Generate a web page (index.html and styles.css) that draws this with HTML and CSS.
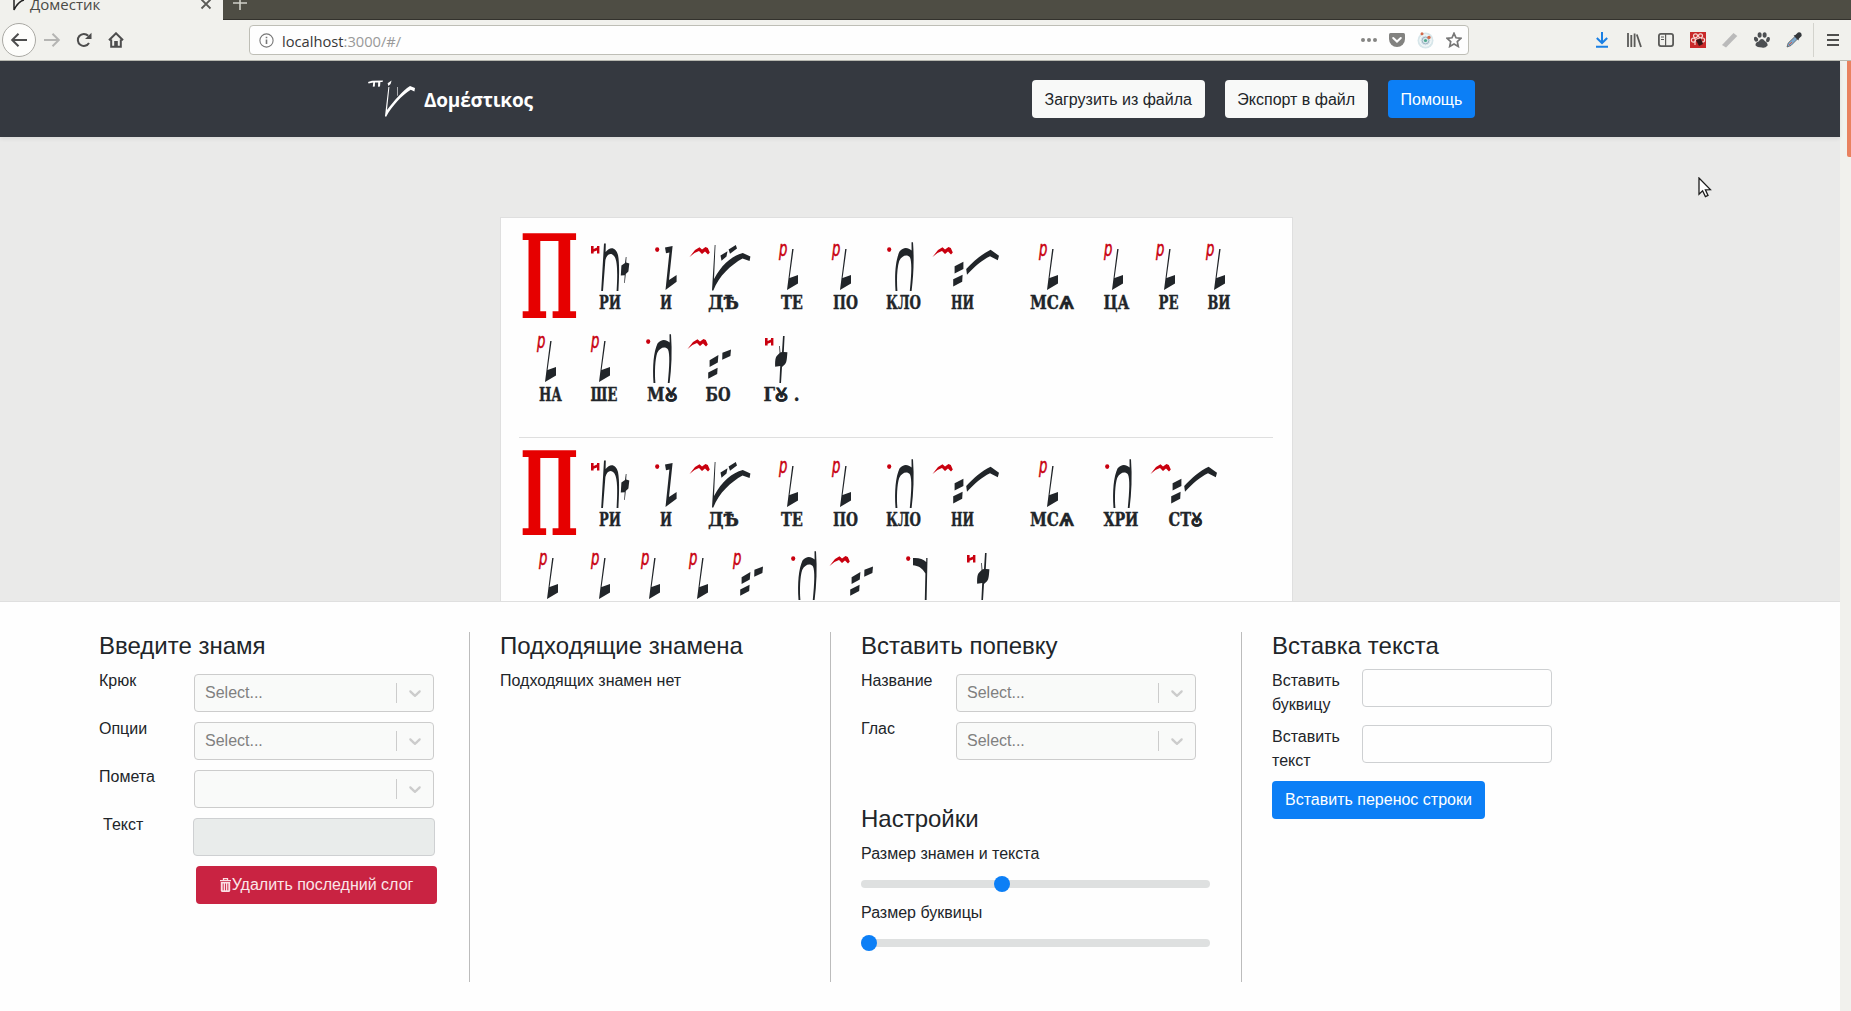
FILE: index.html
```html
<!DOCTYPE html>
<html lang="ru">
<head>
<meta charset="utf-8">
<title>Доместик</title>
<link rel="stylesheet" href="styles.css">
</head>
<body>
<svg class="defs" aria-hidden="true">
  <defs>
    <g id="mark-r" class="mark"><text x="0" y="16" font-size="20.5" textLength="8.4" lengthAdjust="spacingAndGlyphs">р</text></g>
    <g id="mark-n" class="mark"><path d="M0 6 L2.6 6 L2.6 9 L6 7.6 L6 6 L8.4 6 L8.4 13.6 L6 13.6 L6 10.6 L2.6 11.8 L2.6 13.6 L0 13.6Z"/></g>
    <g id="mark-dot" class="mark"><ellipse cx="2.2" cy="9.6" rx="2.1" ry="2.4"/></g>
    <g id="mark-m" class="mark"><path d="M-.5 17 L5 10 L9.5 7.2 L12 9.6 L15.5 7 L17.8 8 L19.8 12.4 L18 14.4 L15 11.4 L12 14 L9 11 L4.5 13Z"/></g>
    <g id="sign-a"><path d="M3 3.5 L4.8 3.5 L4.6 12 C9 6 15 7 17 15 C18.8 24 18 40 17.4 51 L15.6 51 C16.6 34 16.6 22 13.6 16.8 C10.5 12 6 13.5 4.4 20 L2 51 L0.2 51Z M20.4 25.5 L24 23 L24.8 17 L25.5 17 L25.2 22.5 L28.3 23.6 L27.4 31.4 L24.8 34 L23.8 43 L23.2 43 L23.7 35.2 L19.8 35.4Z"/></g>
    <g id="sign-b"><path d="M0 7.5 L7.6 6 L4 40 L11.6 35 L11.6 41.8 L0.5 50 L4.4 12.4 L1 13.2Z"/></g>
    <g id="sign-c"><path d="M2.7 5 L3.5 5 L2 39 C10 24 20 16 30.8 13 L38.4 16.5 L37.6 21 L30.5 18.6 C19 25 7 36 1.3 50.5 L0 50.5Z M8.5 15.5 L15.5 11.2 L14.5 16.5 L9.5 20.8Z M16.6 9.6 L23.8 5 L25 8.4 L18 13.8Z"/></g>
    <g id="sign-l"><path d="M5.2 9 L6.6 9 L2.6 38 L11 35 L11 43.4 L0 50Z"/></g>
    <g id="sign-n"><path d="M16.5 2.3 L18 2.3 C19.3 20 18.5 36 16.6 51 L14.8 51 C16.5 34 17 22 15 17.5 C12 14 7 15.5 4.2 21 C2 28 1.6 40 2.4 51 L0.5 51 C-0.6 34 0.6 20 4.5 11.6 C8 6.8 13 7 16.6 10.5Z"/></g>
    <g id="sign-d"><path d="M1.6 26.2 L10.4 21.8 L10.4 29 L1.6 33.5Z M0.2 39.2 L9.6 34.8 L9.2 41.8 L0.2 46.6Z M13.2 29 C21 21 28 14.5 37.6 9.8 L46 15.8 L44.8 20.3 L37 16.2 C29 20 21 27 14 34.8Z"/></g>
    <g id="sign-e"><path d="M1.6 28.2 L10.4 23 L9.8 30.6 L1.6 35Z M0.2 40.4 L9.6 35.8 L9.2 42 L0.2 46.8Z M14.4 20.8 L23 17.6 L22.4 24 L14.2 27.8Z"/></g>
    <g id="sign-f"><path d="M8 4 L9.6 4 L8.8 20 L12.4 20.2 C12 25 12 30 10 32.3 L7 35 L6 51 L4.4 51 L5.2 34 L0.2 34.8 C0 30 0.2 25 2.2 23.6 L4.6 21 L4.2 14 L4.9 14 L5.4 20.4 L7 20Z"/></g>
    <g id="sign-g"><path d="M0 9 C6 8.6 10 10 13.2 13 L13.2 9 L14.5 9 L13.6 51 L11.8 51 L12.4 24.6 C9 18.6 5 16.6 0 16.2Z"/></g>
    <g id="neume-logo"><path d="M0 2 L4 .8 L15 .4 L14.5 2 L12.4 2 L12 6.6 L10 6.8 L10.2 2.4 L7 2.5 L6.8 6.6 L4.8 6.8 L5.2 2.6 L.6 3.6Z M19.6 3.2 L23.6 .5 L22.6 4 L20.4 6Z M20.4 7 L21.4 7 L19 30 C27 20 34 11 42 6 L47 8 L46.4 11.6 L42.8 9.8 C34 15 24 26 18 37 L17 36Z M29.2 7 L29.8 7 L29.6 15.6 L29 16Z"/></g>
    <path id="chevron" d="M4.516 7.548c.436-.446 1.043-.481 1.576 0L10 11.295l3.908-3.747c.533-.481 1.141-.446 1.574 0 .436.445.408 1.197 0 1.615-.406.418-4.695 4.502-4.695 4.502a1.095 1.095 0 0 1-1.576 0S4.924 9.581 4.516 9.163s-.436-1.17 0-1.615z"/>
  </defs>
</svg>

<header class="browser">
  <div class="tabs">
    <div class="tab">
      <svg class="tab-icon" width="12" height="12" viewBox="0 0 12 12"><path d="M1 0 V11 C3 7 6 2 11 1" fill="none" stroke="#222" stroke-width="1.5"/></svg>
      <span class="tab-title">Доместик</span>
      <svg class="tab-close" width="12" height="12" viewBox="0 0 12 12"><path d="M1.5 1.5 L10.5 10.5 M10.5 1.5 L1.5 10.5" stroke="#5b5b57" stroke-width="1.8"/></svg>
    </div>
    <svg class="tab-new" width="14" height="14" viewBox="0 0 14 14"><path d="M7 0 V14 M0 7 H14" stroke="#d0d0c8" stroke-width="1.6"/></svg>
  </div>
  <div class="toolbar">
    <span class="back"><svg width="18" height="16" viewBox="0 0 18 16"><path d="M17 8 H2.5 M8.5 1.8 L2.2 8 L8.5 14.2" fill="none" stroke="#4d4d4d" stroke-width="2"/></svg></span>
    <svg class="nav-icon forward" width="18" height="16" viewBox="0 0 18 16"><path d="M1 8 H15.5 M9.5 1.8 L15.8 8 L9.5 14.2" fill="none" stroke="#b5b5b3" stroke-width="2"/></svg>
    <svg class="nav-icon reload" width="16" height="16" viewBox="0 0 16 16"><path d="M13 11 A6 6 0 1 1 12.2 3.8" fill="none" stroke="#4d4d4d" stroke-width="2"/><path d="M15.5 .8 V7 H9Z" fill="#4d4d4d"/></svg>
    <svg class="nav-icon home" width="16" height="16" viewBox="0 0 16 16"><path d="M1 8.3 L8 1.3 L15 8.3 M3.2 7.5 V14.8 H12.8 V7.5" fill="none" stroke="#4d4d4d" stroke-width="2"/><path d="M6.2 14 V9 H9.8 V14Z" fill="#4d4d4d"/></svg>
    <div class="address">
      <svg width="15" height="15" viewBox="0 0 15 15"><circle cx="7.5" cy="7.5" r="6.6" fill="none" stroke="#777" stroke-width="1.1"/><path d="M7.5 6.6 V11 M7.5 3.7 V5.3" stroke="#777" stroke-width="1.6"/></svg>
      <span class="url"><b>localhost</b>:3000/#/</span>
      <svg width="16" height="16" viewBox="0 0 16 16" fill="#858583"><circle cx="2" cy="8" r="2"/><circle cx="8" cy="8" r="2"/><circle cx="14" cy="8" r="2"/></svg>
      <svg width="16" height="16" viewBox="0 0 16 16"><path d="M1.5 1 H14.5 Q16 1 16 2.5 V7 A8 8 0 0 1 0 7 V2.5 Q0 1 1.5 1Z" fill="#828280"/><path d="M4.2 6 L8 9.6 L11.8 6" fill="none" stroke="#fff" stroke-width="2" stroke-linecap="round"/></svg>
      <svg width="17" height="17" viewBox="0 0 17 17"><circle cx="8.5" cy="8.5" r="8" fill="#d7e6ea"/><circle cx="8.5" cy="8.5" r="5.6" fill="none" stroke="#fff"/><circle cx="8.5" cy="8.5" r="3.4" fill="none" stroke="#9fb3c4"/><circle cx="8.5" cy="8.5" r="1.6" fill="#4fa88e"/><circle cx="5" cy="1.8" r="1.5" fill="#d2694a"/><circle cx="12" cy="5.4" r="1.7" fill="#d2694a"/></svg>
      <svg width="16" height="16" viewBox="0 0 16 16"><path d="M8 1.3 L10 5.8 L14.9 6.3 L11.3 9.6 L12.3 14.5 L8 12 L3.7 14.5 L4.7 9.6 L1.1 6.3 L6 5.8Z" fill="none" stroke="#777" stroke-width="1.7"/></svg>
    </div>
    <div class="extensions">
      <svg width="16" height="16" viewBox="0 0 16 16"><path d="M8 0 V10.5 M2.8 6 L8 11 L13.2 6 M2 14.8 H14" fill="none" stroke="#1b80e4" stroke-width="2"/></svg>
      <svg width="16" height="16" viewBox="0 0 16 16"><path d="M2 1 V15 M5.3 3 V15 M8.6 1.5 V15 M10.8 2.5 L15 15" fill="none" stroke="#5a5a58" stroke-width="1.8"/></svg>
      <svg width="16" height="16" viewBox="0 0 16 16"><rect x=".9" y="1.9" width="14.2" height="12.2" rx="2" fill="none" stroke="#5a5a58" stroke-width="1.8"/><path d="M7.6 2 V14 M3 5 H6 M3 7.5 H6" stroke="#5a5a58" stroke-width="1.2"/></svg>
      <svg width="16" height="16" viewBox="0 0 16 16"><rect width="16" height="16" fill="#c92a2a"/><g fill="none" stroke="#f6d8d4" stroke-width="1.2"><circle cx="5.5" cy="3.8" r="2"/><circle cx="10.5" cy="3.8" r="2"/><circle cx="3.4" cy="8.2" r="2"/><circle cx="12.6" cy="8" r="2"/><path d="M5 13 V9 Q8 4 11 9"/></g><path d="M6 8 L11 6.5 L13 12 L9 14Z" fill="#3a1616"/></svg>
      <svg width="16" height="16" viewBox="0 0 16 16"><path d="M0 13 L11.5 1 L15.3 4 L4 15.5Z" fill="#bababa"/></svg>
      <svg width="16" height="16" viewBox="0 0 16 16" fill="#4c4f52"><ellipse cx="5.6" cy="3" rx="2" ry="2.8"/><ellipse cx="10.6" cy="3" rx="2" ry="2.8"/><ellipse cx="2" cy="7.2" rx="1.9" ry="2.5" transform="rotate(-30 2 7.2)"/><ellipse cx="14" cy="7.6" rx="1.8" ry="2.6" transform="rotate(15 14 7.6)"/><path d="M1.6 13.5 Q1 10.5 4.6 9.4 Q8 5 10.8 9 Q14 11 13.6 13.4 Q11 16.4 8 15.4 Q3 15.4 1.6 13.5Z"/></svg>
      <svg width="16" height="16" viewBox="0 0 16 16"><path d="M1 15 L2.2 11 L9 4.5 L11.5 7 L5 13.5Z" fill="#7fa9cd" stroke="#55595e" stroke-width=".8"/><path d="M7.6 3.6 L9.4 3 L12 .4 Q16 -.4 15.6 4 L13 6.6 L12.4 8.6Z" fill="#34383c"/><path d="M3 13 L6 10" stroke="#d65b4b"/></svg>
      <span class="divider"></span>
      <svg class="menu" width="12" height="14" viewBox="0 0 12 14"><path d="M0 2 H12 M0 7 H12 M0 12 H12" stroke="#4f4f4d" stroke-width="2"/></svg>
    </div>
  </div>
</header>

<div class="viewport">
  <div class="app">
    <nav class="navbar">
      <a class="brand"><svg width="48" height="38" viewBox="0 0 48 38"><use href="#neume-logo" fill="#fff"/></svg><span>Δομέστικος</span></a>
      <div class="actions">
        <button class="btn light">Загрузить из файла</button>
        <button class="btn light">Экспорт в файл</button>
        <button class="btn primary">Помощь</button>
      </div>
    </nav>

    <main class="workspace">
      <article class="paper">
        <section class="stanza">
          <div class="line">
            <svg class="initial"><text transform="translate(.7 78) scale(.54 1)" font-size="116">П</text></svg>
            <svg class="syllable" style="width:64px"><use href="#mark-n"/><use href="#sign-a" x="10"/><text x="8" y="69" textLength="22" lengthAdjust="spacingAndGlyphs">РИ</text></svg>
            <svg class="syllable" style="width:35px"><use href="#mark-dot"/><use href="#sign-b" x="10"/><text x="5" y="69" textLength="12" lengthAdjust="spacingAndGlyphs">И</text></svg>
            <svg class="syllable" style="width:89px"><use href="#mark-m"/><use href="#sign-c" x="22"/><text x="18" y="69" textLength="31" lengthAdjust="spacingAndGlyphs">ДѢ</text></svg>
            <svg class="syllable" style="width:53px"><use href="#mark-r"/><use href="#sign-l" x="8"/><text x="2" y="69" textLength="22" lengthAdjust="spacingAndGlyphs">ТЕ</text></svg>
            <svg class="syllable" style="width:55px"><use href="#mark-r"/><use href="#sign-l" x="8"/><text x="1" y="69" textLength="25" lengthAdjust="spacingAndGlyphs">ПО</text></svg>
            <svg class="syllable" style="width:46px"><use href="#mark-dot"/><use href="#sign-n" x="8"/><text x="-1" y="69" textLength="35" lengthAdjust="spacingAndGlyphs">КЛО</text></svg>
            <svg class="syllable" style="width:106px"><use href="#mark-m"/><use href="#sign-d" x="20"/><text x="18" y="69" textLength="23" lengthAdjust="spacingAndGlyphs">НИ</text></svg>
            <svg class="syllable" style="width:65px"><use href="#mark-r"/><use href="#sign-l" x="8"/><text x="-9" y="69" textLength="44" lengthAdjust="spacingAndGlyphs">МСѦ</text></svg>
            <svg class="syllable" style="width:52px"><use href="#mark-r"/><use href="#sign-l" x="8"/><text x="-.5" y="69" textLength="26" lengthAdjust="spacingAndGlyphs">ЦА</text></svg>
            <svg class="syllable" style="width:50px"><use href="#mark-r"/><use href="#sign-l" x="8"/><text x="2.5" y="69" textLength="20" lengthAdjust="spacingAndGlyphs">РЕ</text></svg>
            <svg class="syllable" style="width:40px"><use href="#mark-r"/><use href="#sign-l" x="8"/><text x="1.5" y="69" textLength="23" lengthAdjust="spacingAndGlyphs">ВИ</text></svg>
          </div>
          <div class="line next">
            <svg class="syllable" style="width:54px"><use href="#mark-r"/><use href="#sign-l" x="8"/><text x="2" y="69" textLength="23" lengthAdjust="spacingAndGlyphs">НА</text></svg>
            <svg class="syllable" style="width:55px"><use href="#mark-r"/><use href="#sign-l" x="8"/><text x="-.5" y="69" textLength="27" lengthAdjust="spacingAndGlyphs">ШЕ</text></svg>
            <svg class="syllable" style="width:42px"><use href="#mark-dot"/><use href="#sign-n" x="7"/><text x="1" y="69" textLength="30" lengthAdjust="spacingAndGlyphs">МꙊ</text></svg>
            <svg class="syllable" style="width:77px"><use href="#mark-m"/><use href="#sign-e" x="20"/><text x="17.5" y="69" textLength="25" lengthAdjust="spacingAndGlyphs">БО</text></svg>
            <svg class="syllable" style="width:40px"><use href="#mark-n"/><use href="#sign-f" x="10"/><text x="-1.5" y="69" textLength="36" lengthAdjust="spacingAndGlyphs">ГꙊ .</text></svg>
          </div>
        </section>
        <section class="stanza">
          <div class="line">
            <svg class="initial"><text transform="translate(.7 78) scale(.54 1)" font-size="116">П</text></svg>
            <svg class="syllable" style="width:64px"><use href="#mark-n"/><use href="#sign-a" x="10"/><text x="8" y="69" textLength="22" lengthAdjust="spacingAndGlyphs">РИ</text></svg>
            <svg class="syllable" style="width:35px"><use href="#mark-dot"/><use href="#sign-b" x="10"/><text x="5" y="69" textLength="12" lengthAdjust="spacingAndGlyphs">И</text></svg>
            <svg class="syllable" style="width:89px"><use href="#mark-m"/><use href="#sign-c" x="22"/><text x="18" y="69" textLength="31" lengthAdjust="spacingAndGlyphs">ДѢ</text></svg>
            <svg class="syllable" style="width:53px"><use href="#mark-r"/><use href="#sign-l" x="8"/><text x="2" y="69" textLength="22" lengthAdjust="spacingAndGlyphs">ТЕ</text></svg>
            <svg class="syllable" style="width:55px"><use href="#mark-r"/><use href="#sign-l" x="8"/><text x="1" y="69" textLength="25" lengthAdjust="spacingAndGlyphs">ПО</text></svg>
            <svg class="syllable" style="width:46px"><use href="#mark-dot"/><use href="#sign-n" x="8"/><text x="-1" y="69" textLength="35" lengthAdjust="spacingAndGlyphs">КЛО</text></svg>
            <svg class="syllable" style="width:106px"><use href="#mark-m"/><use href="#sign-d" x="20"/><text x="18" y="69" textLength="23" lengthAdjust="spacingAndGlyphs">НИ</text></svg>
            <svg class="syllable" style="width:66px"><use href="#mark-r"/><use href="#sign-l" x="8"/><text x="-9" y="69" textLength="44" lengthAdjust="spacingAndGlyphs">МСѦ</text></svg>
            <svg class="syllable" style="width:46px"><use href="#mark-dot"/><use href="#sign-n" x="8"/><text x="-1.5" y="69" textLength="35" lengthAdjust="spacingAndGlyphs">ХРИ</text></svg>
            <svg class="syllable" style="width:70px"><use href="#mark-m"/><use href="#sign-d" x="20"/><text x="17.5" y="69" textLength="34" lengthAdjust="spacingAndGlyphs">СТꙊ</text></svg>
          </div>
          <div class="line next wide">
            <svg class="syllable" style="width:52px"><use href="#mark-r"/><use href="#sign-l" x="8"/></svg>
            <svg class="syllable" style="width:50px"><use href="#mark-r"/><use href="#sign-l" x="8"/></svg>
            <svg class="syllable" style="width:48px"><use href="#mark-r"/><use href="#sign-l" x="8"/></svg>
            <svg class="syllable" style="width:44px"><use href="#mark-r"/><use href="#sign-l" x="8"/></svg>
            <svg class="syllable" style="width:58px"><use href="#mark-r"/><use href="#sign-e" x="7"/></svg>
            <svg class="syllable" style="width:39px"><use href="#mark-dot"/><use href="#sign-n" x="7"/></svg>
            <svg class="syllable" style="width:76px"><use href="#mark-m"/><use href="#sign-e" x="20"/></svg>
            <svg class="syllable" style="width:61px"><use href="#mark-dot"/><use href="#sign-g" x="7"/></svg>
            <svg class="syllable" style="width:40px"><use href="#mark-n"/><use href="#sign-f" x="10"/></svg>
          </div>
        </section>
      </article>
    </main>

    <footer class="panels">
      <section class="panel sign-panel">
        <h4>Введите знамя</h4>
        <div class="field"><label>Крюк</label><div class="select"><span>Select...</span><i></i><svg width="20" height="20" viewBox="0 0 20 20"><use href="#chevron"/></svg></div></div>
        <div class="field"><label>Опции</label><div class="select"><span>Select...</span><i></i><svg width="20" height="20" viewBox="0 0 20 20"><use href="#chevron"/></svg></div></div>
        <div class="field"><label>Помета</label><div class="select"><span></span><i></i><svg width="20" height="20" viewBox="0 0 20 20"><use href="#chevron"/></svg></div></div>
        <div class="field text-field"><label>Текст</label><div class="input disabled"></div></div>
        <button class="btn danger"><svg width="12" height="14" viewBox="0 0 12 14"><path d="M0 2.6 H11 M3.5 2.4 V.7 H7.5 V2.4" fill="none" stroke="#fbdfe4" stroke-width="1.3"/><path d="M.8 4 H10.2 V12.6 Q10.2 14 9 14 H2 Q.8 14 .8 12.6Z" fill="#fbdfe4"/><path d="M3.2 5.5 V12.3 M5.5 5.5 V12.3 M7.8 5.5 V12.3" stroke="#c92342" stroke-width=".9"/></svg>Удалить последний слог</button>
      </section>
      <section class="panel match-panel">
        <h4>Подходящие знамена</h4>
        <p>Подходящих знамен нет</p>
      </section>
      <section class="panel phrase-panel">
        <h4>Вставить попевку</h4>
        <div class="field"><label>Название</label><div class="select"><span>Select...</span><i></i><svg width="20" height="20" viewBox="0 0 20 20"><use href="#chevron"/></svg></div></div>
        <div class="field"><label>Глас</label><div class="select"><span>Select...</span><i></i><svg width="20" height="20" viewBox="0 0 20 20"><use href="#chevron"/></svg></div></div>
        <h4 class="settings">Настройки</h4>
        <p>Размер знамен и текста</p>
        <div class="range"><span class="knob" style="margin-left:133px"></span></div>
        <p>Размер буквицы</p>
        <div class="range"><span class="knob"></span></div>
      </section>
      <section class="panel text-panel">
        <h4>Вставка текста</h4>
        <div class="field"><label>Вставить буквицу</label><div class="input"></div></div>
        <div class="field"><label>Вставить текст</label><div class="input"></div></div>
        <button class="btn primary">Вставить перенос строки</button>
      </section>
    </footer>
  </div>
  <div class="scrollbar"><div class="thumb"></div></div>
</div>
<svg class="cursor" width="14" height="21" viewBox="0 0 14 21"><path d="M1 1 V17.2 L4.6 13.8 L7.4 19.6 L10 18.4 L7.4 12.8 L12.4 12.6Z" fill="#fff" stroke="#1c1c1c" stroke-width="1.3"/></svg>
</body>
</html>
```
FILE: styles.css
```css
* { box-sizing: border-box; }
html, body { margin: 0; height: 100%; overflow: hidden; }
body {
  display: flex;
  flex-direction: column;
  font: 16px/24px "Liberation Sans", Arial, sans-serif;
  color: #212529;
  background: #fefefe;
}
svg { display: block; flex: none; }
.defs { position: absolute; width: 0; height: 0; }
button { font: inherit; }
h4, p { margin: 0; }

/* browser chrome */
.browser { flex: none; height: 61px; font-family: "Open Sans", "Noto Sans", sans-serif; }
.tabs { display: flex; height: 20px; background: #4e4d44; border-bottom: 1px solid #33322d; }
.tab { display: flex; width: 223px; height: 20px; padding-left: 13px; background: #f1f1ed; color: #4a4a46; }
.tab-icon { margin-top: -1px; }
.tab-title { width: 175px; padding-left: 5px; font-size: 15px; line-height: 20px; margin-top: -6px; }
.tab-close { margin-top: -2px; }
.tab-new { margin: -4px 0 0 10px; }
.toolbar {
  display: flex;
  align-items: center;
  height: 41px;
  padding-left: 2px;
  background: #f1f1ed;
  border-bottom: 1px solid #b9bab2;
}
.back {
  display: flex;
  align-items: center;
  justify-content: center;
  width: 34px;
  height: 34px;
  border: 1px solid #aaa9a4;
  border-radius: 50%;
  background: #fdfdfb;
}
.forward { margin-left: 7px; }
.reload { margin-left: 15px; }
.home { margin-left: 16px; }
.address {
  display: flex;
  align-items: center;
  gap: 12px;
  width: 1220px;
  height: 30px;
  margin-left: 125px;
  padding: 0 6px 0 9px;
  border: 1px solid #bebeb6;
  border-radius: 4px;
  background: #fefefe;
}
.url { flex: 1; margin-left: -4px; padding-top: 1px; font-size: 14.7px; color: #999; }
.url b { font-weight: 400; color: #383838; }
.extensions { display: flex; align-items: center; gap: 16px; margin-left: 125px; }
.divider { width: 1px; height: 34px; margin-left: -5px; background: #d3d3cd; }
.menu { margin-left: -3px; }

/* page */
.viewport { flex: 1; display: flex; min-height: 0; }
.app { flex: 1; display: flex; flex-direction: column; min-width: 0; }
.scrollbar { width: 11px; padding-left: 7px; background: #f1f1ed; }
.thumb { height: 96px; background: #e9825f; border-radius: 0 0 0 2px; }

.navbar {
  display: flex;
  justify-content: space-between;
  align-items: center;
  flex: none;
  height: 76px;
  padding: 0 365px 0 368px;
  background: #353940;
  box-shadow: 0 2px 4px rgba(0, 0, 0, .07);
  position: relative;
}
.brand { display: flex; align-items: center; gap: 8px; color: #fff; }
.brand span { font: 700 19px/30px "Open Sans", "Noto Sans", sans-serif; letter-spacing: -.2px; padding-top: 1px; }
.actions { display: flex; gap: 20px; }
.btn {
  height: 38px;
  padding: 0 12px;
  border: 1px solid transparent;
  border-radius: 4px;
  white-space: nowrap;
}
.actions .btn { padding: 1px 11.7px 0; }
.light { background: #f8f9f8; color: #212529; }
.primary { background: #0c7ff6; color: #fff; }
.danger { background: #c92342; color: #fbe6e9; }

.workspace {
  flex: none;
  height: 464px;
  padding: 80px 0 0 500px;
  overflow: hidden;
  background: #eaeae9;
}
.paper {
  width: 793px;
  height: 440px;
  padding: 0 19px 0 18px;
  border: 1px solid #dfdfdf;
  background: #fefefe;
}
.stanza { height: 217px; padding-top: 22px; }
.stanza + .stanza { border-top: 1px solid #dfdfdf; padding-top: 19px; margin-top: 2px; }
.line { display: flex; height: 92px; }
.next { padding-left: 18px; }
.wide { padding-left: 20px; }
.initial { width: 72px; height: 92px; overflow: visible; }
.initial text { font-family: "DejaVu Serif", serif; font-weight: 700; fill: #e60000; }
.syllable { height: 92px; overflow: visible; fill: #212529; }
.syllable > text { font: 700 18px "DejaVu Serif", "DejaVu Sans", serif; stroke: #212529; stroke-width: .4px; }
.mark { fill: #c9000f; }
.mark text { font-family: "DejaVu Sans Condensed", "DejaVu Sans", sans-serif; font-style: italic; stroke: #c9000f; stroke-width: .5px; }

/* bottom panels */
.panels {
  flex: 1;
  display: flex;
  align-items: flex-start;
  padding-top: 30px;
  border-top: 1px solid #dfdfdf;
  background: #fefefe;
}
.panel { height: 350px; padding-left: 30px; border-right: 1px solid #bcbcbc; }
.panel h4 { font-size: 24px; font-weight: 400; line-height: 27px; margin-bottom: 10px; white-space: nowrap; }
.sign-panel { width: 470px; padding-left: 99px; }
.match-panel { width: 361px; }
.phrase-panel { width: 411px; }
.text-panel { flex: 1; border-right: 0; }
.field { display: flex; height: 48px; }
.field label { width: 95px; }
.select {
  display: flex;
  align-items: center;
  width: 240px;
  height: 38px;
  margin-top: 5px;
  padding: 0 8px 0 10px;
  border: 1px solid #ccc;
  border-radius: 4px;
  background: #f9faf9;
  color: #808080;
}
.select span { flex: 1; }
.select i { width: 1px; height: 20px; margin-right: 8px; background: #ccc; }
.select svg { fill: #ccc; }
.input { width: 190px; height: 38px; border: 1px solid #ced0d2; border-radius: 4px; background: #fefefe; }
.input.disabled { width: 242px; margin-top: 5px; background: #e9eceb; }
.text-field label { width: 94px; padding-left: 4px; }
.danger { display: flex; align-items: center; justify-content: center; width: 241px; margin: 5px 0 0 97px; }
.panel .settings { margin-top: 40px; }
.range { display: flex; align-items: center; width: 349px; height: 8px; margin: 14px 0 13px; border-radius: 4px; background: #dee0e0; }
.knob { width: 16px; height: 16px; border-radius: 50%; background: #0c7ff6; }
.text-panel .field { height: 56px; }
.text-panel label { width: 90px; padding-right: 15px; }

.cursor { position: absolute; left: 1698px; top: 177px; }
```
